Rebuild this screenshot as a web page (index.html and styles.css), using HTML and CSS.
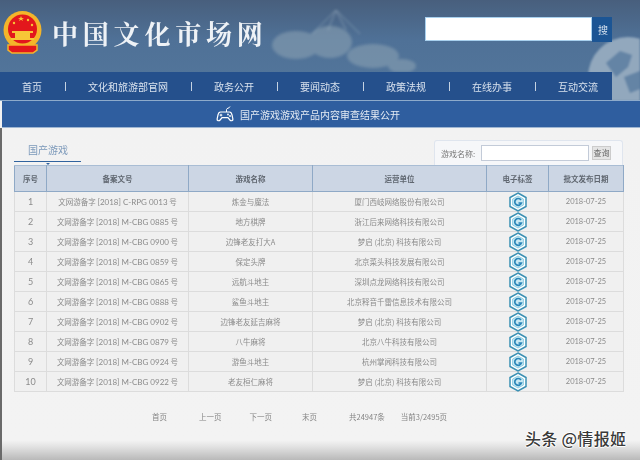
FILE: index.html

```html
<!DOCTYPE html>
<html>
<head>
    <meta charset="utf-8">
    <title>中国文化市场网</title>
    <link rel="stylesheet" href="styles.css">
</head>
<body>
    <svg class="defs" width="0" height="0">
        <symbol id="tag" viewBox="0 0 18 20">
            <polygon points="9,1 17,5.5 17,14.5 9,19 1,14.5 1,5.5" fill="#fff" stroke="#3a90b3" stroke-width="1.5"/>
            <polygon points="9,4 14.4,7 14.4,13 9,16 3.6,13 3.6,7" fill="#c9e9f3" stroke="#7cc6de" stroke-width=".8"/>
            <path d="M12 8A3.4 3.4 0 1 0 12.400 11H9.500" fill="none" stroke="#2b86b8" stroke-width="1.700"/>
        </symbol>
    </svg>

    <header class="top">
        <svg class="flowers" width="150" height="72" viewBox="0 0 150 72">
            <g fill="#8fa5b4" opacity="0.55">
                <ellipse cx="28" cy="45" rx="24" ry="14"/>
                <ellipse cx="62" cy="42" rx="22" ry="16"/>
                <ellipse cx="105" cy="56" rx="26" ry="12"/>
                <ellipse cx="134" cy="66" rx="14" ry="7"/>
            </g>
            <g fill="none" stroke="#a9bccb" stroke-width="1" opacity="0.6">
                <path d="M44 34L68 10L92 34"/>
                <path d="M68 10L60 30M68 10L78 30"/>
            </g>
        </svg>
        <svg class="globe" width="56" height="64" viewBox="0 0 56 64">
            <circle cx="44" cy="40" r="40" fill="#92a8bd"/>
            <g fill="#6484a5">
                <path d="M22 26l14 -12l12 4l-4 12l-12 10z"/>
                <path d="M40 40l16 -6v18l-10 4z"/>
            </g>
        </svg>
        <div class="brand">
            <svg class="emblem" width="41" height="44" viewBox="0 0 41 44">
                <circle cx="20.5" cy="19" r="19" fill="#f4b52a"/>
                <circle cx="20.5" cy="18" r="14.5" fill="#e3171c"/>
                <g fill="#f7c637">
                    <polygon points="19,5 21,10 16,7 22,7 17,10"/>
                    <circle cx="12" cy="12" r="1.2"/>
                    <circle cx="26" cy="9" r="1.2"/>
                    <circle cx="30" cy="14" r="1.2"/>
                    <rect x="10" y="20" width="21" height="2"/>
                    <rect x="13" y="22" width="15" height="5"/>
                    <rect x="9" y="27" width="23" height="2"/>
                </g>
                <path d="M6 34h29v5l-4 3h-21l-4 -3z" fill="#e3171c" stroke="#f4b52a" stroke-width="1.5"/>
            </svg>
            <h1 class="site-name">中国文化市场网</h1>
            <form class="site-search">
                <input class="site-search-input" type="text">
                <button class="site-search-btn" type="button">搜</button>
            </form>
        </div>
        <nav class="nav">
            <a>首页</a><i></i>
            <a>文化和旅游部官网</a><i></i>
            <a>政务公开</a><i></i>
            <a>要闻动态</a><i></i>
            <a>政策法规</a><i></i>
            <a>在线办事</a><i></i>
            <a>互动交流</a>
        </nav>
    </header>

    <div class="banner">
        <svg class="pad-icon" width="18" height="18" viewBox="0 0 18 18">
            <path d="M4.500 7h9c1.400 0 2.100 1 2.500 3l.9 4c.3 1.600-1.800 2.400-3 1l-1.900-2.300h-6l-1.900 2.300c-1.200 1.400-3.300.6-3-1l.9-4c.4-2 1.100-3 2.500-3z" fill="none" stroke="#fff" stroke-width="1.200"/>
            <path d="M10.500 7V4.500c0-1.500 3-1 3.500-3M5 8.800v2.600M3.700 10.100h2.600" fill="none" stroke="#fff" stroke-width="1"/>
            <circle cx="12" cy="9.500" r=".9" fill="#fff"/>
            <circle cx="14" cy="11" r=".9" fill="#fff"/>
        </svg>
        <span>国产游戏游戏产品内容审查结果公开</span>
    </div>

    <main class="content">
        <div class="toolbar">
            <div class="tab">国产游戏</div>
            <form class="query">
                <label class="query-label">游戏名称:</label>
                <input class="query-input" type="text">
                <button class="query-btn" type="button">查询</button>
            </form>
        </div>

        <table class="list">
            <colgroup>
                <col class="c-no"><col class="c-code"><col class="c-name"><col class="c-org"><col class="c-tag"><col class="c-date">
            </colgroup>
            <thead>
                <tr><th>序号</th><th>备案文号</th><th>游戏名称</th><th>运营单位</th><th>电子标签</th><th>批文发布日期</th></tr>
            </thead>
            <tbody>
                <tr><td class="idx">1</td><td>文网游备字 <span class="en">[2018] C-RPG 0013</span> 号</td><td>炼金与魔法</td><td>厦门西岐网络股份有限公司</td><td><svg class="tag"><use href="#tag"/></svg></td><td class="date">2018-07-25</td></tr>
                <tr><td class="idx">2</td><td>文网游备字 <span class="en">[2018] M-CBG 0885</span> 号</td><td>地方棋牌</td><td>浙江后来网络科技有限公司</td><td><svg class="tag"><use href="#tag"/></svg></td><td class="date">2018-07-25</td></tr>
                <tr><td class="idx">3</td><td>文网游备字 <span class="en">[2018] M-CBG 0900</span> 号</td><td>边锋老友打大A</td><td>梦启 (北京) 科技有限公司</td><td><svg class="tag"><use href="#tag"/></svg></td><td class="date">2018-07-25</td></tr>
                <tr><td class="idx">4</td><td>文网游备字 <span class="en">[2018] M-CBG 0859</span> 号</td><td>保定头牌</td><td>北京菜头科技发展有限公司</td><td><svg class="tag"><use href="#tag"/></svg></td><td class="date">2018-07-25</td></tr>
                <tr><td class="idx">5</td><td>文网游备字 <span class="en">[2018] M-CBG 0865</span> 号</td><td>远航斗地主</td><td>深圳点龙网络科技有限公司</td><td><svg class="tag"><use href="#tag"/></svg></td><td class="date">2018-07-25</td></tr>
                <tr><td class="idx">6</td><td>文网游备字 <span class="en">[2018] M-CBG 0888</span> 号</td><td>鲨鱼斗地主</td><td>北京释音千雷信息技术有限公司</td><td><svg class="tag"><use href="#tag"/></svg></td><td class="date">2018-07-25</td></tr>
                <tr><td class="idx">7</td><td>文网游备字 <span class="en">[2018] M-CBG 0902</span> 号</td><td>边锋老友延吉麻将</td><td>梦启 (北京) 科技有限公司</td><td><svg class="tag"><use href="#tag"/></svg></td><td class="date">2018-07-25</td></tr>
                <tr><td class="idx">8</td><td>文网游备字 <span class="en">[2018] M-CBG 0879</span> 号</td><td>八牛麻将</td><td>北京八牛科技有限公司</td><td><svg class="tag"><use href="#tag"/></svg></td><td class="date">2018-07-25</td></tr>
                <tr><td class="idx">9</td><td>文网游备字 <span class="en">[2018] M-CBG 0924</span> 号</td><td>游鱼斗地主</td><td>杭州掌闻科技有限公司</td><td><svg class="tag"><use href="#tag"/></svg></td><td class="date">2018-07-25</td></tr>
                <tr><td class="idx">10</td><td>文网游备字 <span class="en">[2018] M-CBG 0922</span> 号</td><td>老友桓仁麻将</td><td>梦启 (北京) 科技有限公司</td><td><svg class="tag"><use href="#tag"/></svg></td><td class="date">2018-07-25</td></tr>
            </tbody>
        </table>

        <div class="pager">
            <a>首页</a>
            <a>上一页</a>
            <a class="next">下一页</a>
            <a class="last">末页</a>
            <span>共24947条</span>
            <span class="current">当前3/2495页</span>
        </div>
    </main>

    <div class="watermark">头条 @情报姬</div>
</body>
</html>
```

FILE: styles.css

```css
* {
    box-sizing: border-box;
}

html, body {
    margin: 0;
    height: 460px;
    overflow: hidden;
}

body {
    position: relative;
    font-family: "Noto Sans CJK SC", sans-serif;
    background: #f2f2f2;
}

.defs {
    display: block;
    height: 0;
}

.top {
    position: relative;
    height: 101px;
    overflow: hidden;
    background: linear-gradient(#485f7d, #4f7197 40%, #54779c);
    border-bottom: 1px solid #8eabcb;
    filter: blur(.4px);
}

.flowers {
    position: absolute;
    top: 0;
    left: 268px;
    filter: blur(1.5px);
}

.globe {
    position: absolute;
    top: 37px;
    right: 0;
    filter: blur(.8px);
}

.brand {
    position: relative;
    display: flex;
    align-items: flex-start;
    height: 72px;
    padding-left: 2px;
}

.emblem {
    margin-top: 11px;
}

.site-name {
    margin: 11px 0 0 9px;
    font-family: "Noto Serif CJK SC", "Noto Sans CJK SC", sans-serif;
    font-size: 26px;
    font-weight: 700;
    line-height: 44px;
    letter-spacing: 4.800px;
    color: #eef2f6;
    white-space: nowrap;
}

.site-search {
    display: flex;
    margin: 17px 28px 0 auto;
}

.site-search-input {
    width: 167px;
    height: 24px;
    border: 1px solid #a8d0ee;
    background: #fff;
}

.site-search-btn {
    width: 20px;
    height: 25px;
    padding: 0 0 0 6px;
    border: none;
    overflow: hidden;
    font-family: inherit;
    font-size: 10px;
    text-align: left;
    color: #d5e2ef;
    background: #1c5594;
}

.nav {
    position: relative;
    display: flex;
    align-items: center;
    gap: 22.500px;
    width: 612px;
    height: 28px;
    padding-left: 22px;
    font-size: 10px;
    color: #d9e2ee;
    background: #25508c;
}

.nav i {
    width: 1px;
    height: 9px;
    background: #c5d2e2;
}

.banner {
    display: flex;
    align-items: center;
    gap: 6px;
    height: 27px;
    margin-left: 2px;
    padding-left: 214px;
    font-size: 10px;
    color: #e4ebf4;
    background: #2f5e9f;
    border-bottom: 1px solid #9fb6d2;
    filter: blur(.3px);
}

.content {
    height: 332px;
    padding: 12px 17px 0 14px;
    border-left: 2px solid #6a6a6a;
    background: linear-gradient(#f2f2f2, #f3f3f3 94%, #e2e2e2 96%, #b9b9b9);
    filter: blur(.4px);
}

.toolbar {
    display: flex;
    align-items: flex-end;
    justify-content: space-between;
    height: 25px;
    margin-left: -2px;
}

.tab {
    position: relative;
    width: 67px;
    height: 21px;
    margin-bottom: 3px;
    padding-left: 14px;
    font-size: 10px;
    line-height: 17px;
    color: #7c99ba;
    border-bottom: 1.500px solid #31639e;
}

.tab::after {
    content: "";
    position: absolute;
    left: 32px;
    bottom: -4px;
    border: 2px solid transparent;
    border-bottom: 0;
    border-top-color: #31639e;
}

.query {
    display: flex;
    align-items: center;
    width: 189px;
    height: 25px;
    padding-left: 6px;
    background: #f6f7f9;
    border: 1px solid #dfe5ee;
    border-bottom: 0;
    border-radius: 3px 3px 0 0;
}

.query-label {
    width: 40px;
    font-size: 8px;
    color: #777;
}

.query-input {
    width: 108px;
    height: 16px;
    border: 1px solid #c3cbd8;
    background: #fff;
}

.query-btn {
    width: 19px;
    height: 14px;
    margin-left: 3px;
    padding: 0;
    border: 1px solid #ccc;
    font-family: inherit;
    font-size: 8px;
    line-height: 12px;
    color: #666;
    background: #e4e4e4;
}

.list {
    width: 609px;
    margin-left: -2px;
    table-layout: fixed;
    border-collapse: collapse;
    font-size: 7.500px;
    color: #8b8b8b;
    background: #f0f0f0;
}

.c-no { width: 32px; }
.c-code { width: 142px; }
.c-name { width: 124px; }
.c-org { width: 174px; }
.c-tag { width: 62px; }
.c-date { width: 75px; }

.list th {
    height: 26px;
    padding: 0;
    font-weight: 700;
    color: #606770;
    background: #ccd6e4;
    border: 1px solid #8fa9c6;
    border-top-color: #a9bdd4;
}

.list td {
    height: 20px;
    padding: 0;
    line-height: 10px;
    text-align: center;
    white-space: nowrap;
    border: 1px solid #dcdcdc;
}

.list .idx {
    font-family: Lato, sans-serif;
    font-size: 9px;
}

.list .date {
    font-family: Lato, sans-serif;
    font-size: 7.500px;
}

.en {
    font-family: Lato, sans-serif;
    font-size: 8px;
}

.tag {
    display: block;
    width: 18px;
    height: 20px;
    margin: -1px auto -1px;
}

.pager {
    display: flex;
    gap: 32px;
    margin: 19px 0 0 136px;
    font-size: 7.500px;
    color: #858585;
}

.next {
    margin-left: -4px;
}

.last {
    margin-left: -2px;
}

.current {
    margin-left: -16px;
}

.watermark {
    position: absolute;
    top: 427px;
    left: 525px;
    font-size: 16px;
    font-weight: 500;
    line-height: 22px;
    letter-spacing: .3px;
    color: #3a3a3a;
    white-space: nowrap;
    text-shadow: 1px 0 0 #fff, -1px 0 0 #fff, 0 1px 0 #fff, 0 -1px 0 #fff;
}
```
